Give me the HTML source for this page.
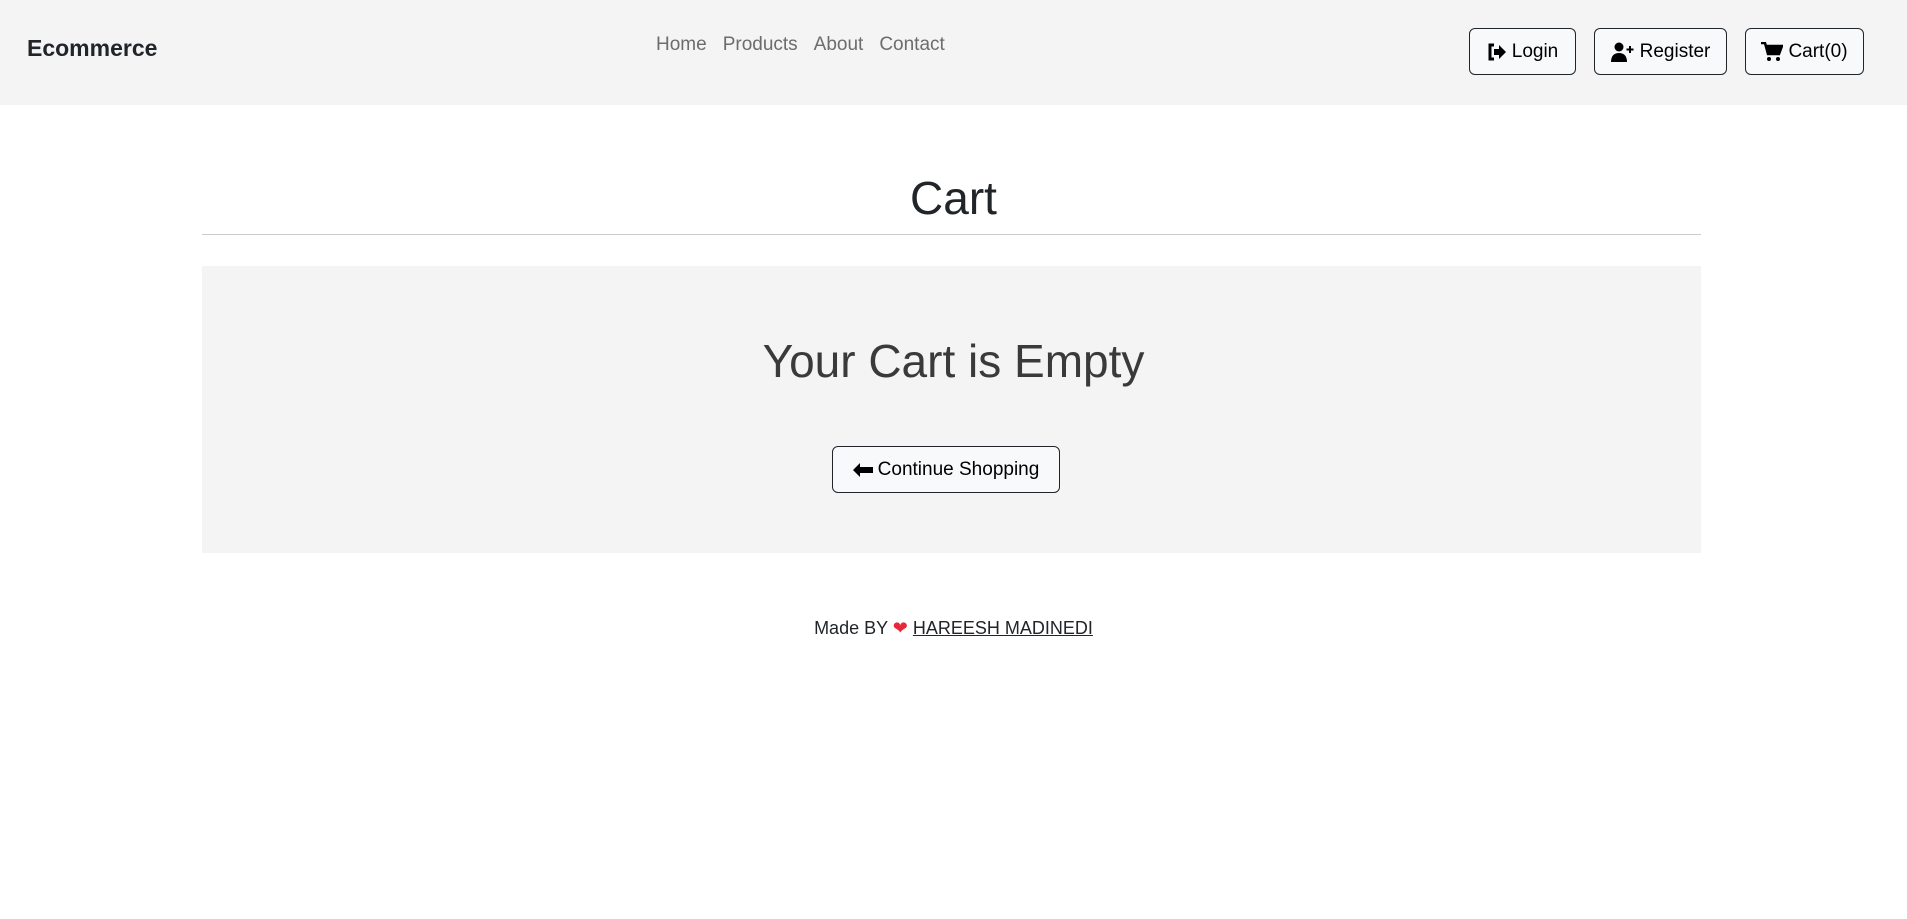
<!DOCTYPE html>
<html><head><style>
body{margin:0;width:1907px;height:919px;background:#fff;font-family:"Liberation Sans",sans-serif;color:#212529;overflow:hidden;position:relative}
.nav{position:absolute;left:0;top:0;width:1907px;height:105px;background:#f4f4f4}
.brand{position:absolute;left:27px;top:35px;font-weight:bold;font-size:23px;color:#212529}
.links{position:absolute;left:656px;top:34px;font-size:19px;color:#6c6c6c;word-spacing:0}
.links span{margin-right:16px}
.btn{position:absolute;box-sizing:border-box;border:1px solid #212529;border-radius:6px;background:#f8f9fa;font-size:19px;color:#000;display:flex;align-items:center;justify-content:center;gap:5px}
h1{position:absolute;left:0;width:1907px;text-align:center;top:171px;margin:0;font-weight:normal;font-size:46px}
.hr{position:absolute;left:202px;width:1499px;top:234px;height:1px;background:#ccc}
.jum{position:absolute;left:202px;width:1499px;top:266px;height:287px;background:#f4f4f4}
.empty{position:absolute;left:0;width:1907px;text-align:center;top:334px;font-size:46px;font-weight:300;color:#3a3a3a}
.foot{position:absolute;left:0;width:1907px;text-align:center;top:618px;font-size:18px}
.foot u{text-decoration:underline}
</style></head><body>
<div class="nav">
<div class="brand">Ecommerce</div>
<div class="links"><span>Home</span><span>Products</span><span>About</span><span>Contact</span></div>
<div class="btn" style="left:1469px;top:28px;width:107px;height:47px">
<svg width="20" height="18" viewBox="0 0 20 18"><path d="M7 2H3v14h4" fill="none" stroke="#000" stroke-width="3"/><path d="M7 6h5V2l7 7-7 7v-4H7z" fill="#000"/></svg>Login</div>
<div class="btn" style="left:1594px;top:28px;width:133px;height:47px">
<svg width="24" height="20" viewBox="0 0 24 20"><circle cx="8" cy="5" r="4.5" fill="#000"/><path d="M0 20c0-6 3-9 8-9s8 3 8 9z" fill="#000"/><path d="M19 4v7M15.5 7.5h7" stroke="#000" stroke-width="2"/></svg>Register</div>
<div class="btn" style="left:1745px;top:28px;width:119px;height:47px">
<svg width="22" height="20" viewBox="0 0 22 20"><path d="M0 1h4l3 11h11l3-8H5" fill="none" stroke="#000" stroke-width="2.5"/><path d="M5 4h16l-3 8H7z" fill="#000"/><circle cx="8" cy="17" r="2" fill="#000"/><circle cx="17" cy="17" r="2" fill="#000"/></svg>Cart(0)</div>
</div>
<h1>Cart</h1>
<div class="hr"></div>
<div class="jum"></div>
<div class="empty">Your Cart is Empty</div>
<div class="btn" style="left:832px;top:446px;width:228px;height:47px;font-size:19px">
<svg width="20" height="14" viewBox="0 0 20 14"><path d="M0 7l7-7v4h13v6H7v4z" fill="#000"/></svg>Continue Shopping</div>
<div class="foot">Made BY <span style="color:#e8283a">&#10084;</span> <u>HAREESH MADINEDI</u></div>
</body></html>
